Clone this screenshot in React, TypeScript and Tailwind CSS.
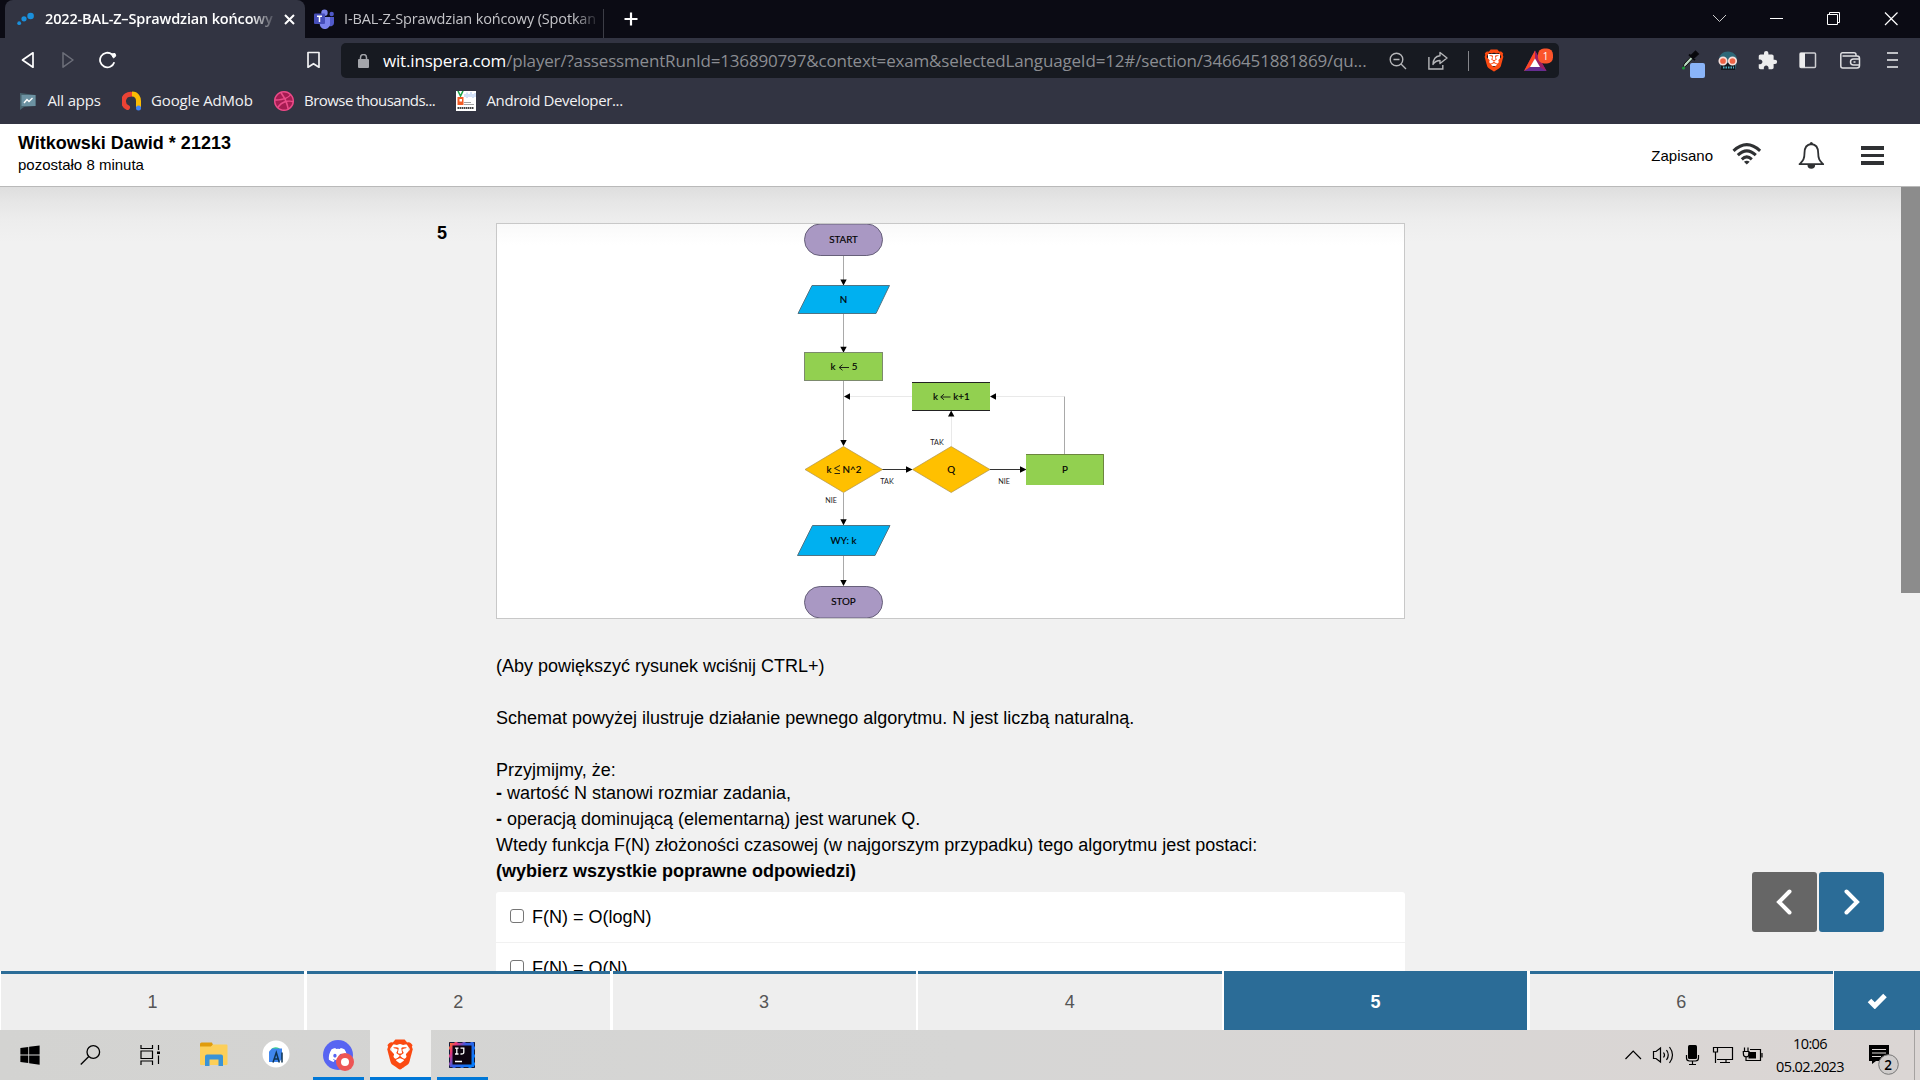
import React from "react";
import { SiBrave, SiDribbble } from "react-icons/si";
import { FaDiscord, FaWindows } from "react-icons/fa";
import { MdExtension } from "react-icons/md";

function TabStrip() {
  return (
    <div className="flex h-[38px] shrink-0 bg-[#0b0b14] pl-[5px] text-[14.5px] text-white">
      <div className="flex h-[38px] w-[300px] items-center rounded-t-[8px] bg-[#323442]">
        <svg className="ml-[12px] h-[14px] w-[17px] shrink-0" viewBox="0 0 17 14">
          <circle cx="2.2" cy="11.2" r="1.9" fill="#1a90dc" />
          <circle cx="7" cy="6.8" r="2.6" fill="#1a90dc" />
          <circle cx="13.6" cy="4" r="3.3" fill="#1a90dc" />
        </svg>
        <span className="ml-[11px] w-[230px] overflow-hidden whitespace-nowrap font-semibold tracking-[-0.15px] [mask-image:linear-gradient(to_right,black_205px,transparent_232px)]">
          2022-BAL-Z–Sprawdzian końcowy
        </span>
        <svg className="ml-[9px] h-[11px] w-[11px] shrink-0" viewBox="0 0 11 11">
          <path d="M1 1 L10 10 M10 1 L1 10" stroke="#fff" strokeWidth="2" />
        </svg>
      </div>
      <svg className="ml-[9px] mt-[9px] h-[20px] w-[20px] shrink-0" viewBox="0 0 20 20">
        <circle cx="17.700" cy="5" r="2.200" fill="#5059c9" />
        <path d="M14 8 h6 v6 a3.500 3.500 0 0 1 -5 3 z" fill="#5059c9" />
        <circle cx="10.500" cy="3.700" r="3.200" fill="#7b83eb" />
        <path d="M6 8 h10 v6 a5.200 5.200 0 0 1 -10.200 2 z" fill="#7b83eb" />
        <rect x="0" y="4.500" width="11" height="10.500" rx="1" fill="#464eb8" />
        <path d="M3 7.300 h5 M5.500 7.300 v5.700" stroke="#fff" strokeWidth="1.500" />
      </svg>
      <span className="ml-[10px] mt-[8px] w-[254px] overflow-hidden whitespace-nowrap leading-[22px] tracking-[-0.15px] text-[#c4c4c8] [mask-image:linear-gradient(to_right,black_230px,transparent_256px)]">
        I-BAL-Z-Sprawdzian końcowy (Spotkan
      </span>
      <div className="ml-[5px] mt-[9px] h-[29px] w-px bg-[#3c3d46]" />
      <svg className="ml-[20px] mt-[12px] h-[14px] w-[14px]" viewBox="0 0 14 14">
        <path d="M7 0.500 V13.500 M0.500 7 H13.500" stroke="#fff" strokeWidth="2.200" />
      </svg>
      <div className="ml-auto mr-[22px] mt-[12px] flex h-[14px]">
        <svg className="h-[14px] w-[204px]" viewBox="0 0 204 14" fill="none" stroke="#fff">
          <path d="M19 3 L25.500 9.500 L32 3" strokeWidth="1" stroke="#ccc" />
          <path d="M76 6.500 H89" />
          <path d="M133.500 2.500 h10 v10 h-10 z M135.500 2.500 v-2 h10 v10 h-2" />
          <path d="M191 0.500 L203.500 13 M203.500 0.500 L191 13" strokeWidth="1.200" />
        </svg>
      </div>
    </div>
  );
}

function BraveLion({ className }: { className: string }) {
  return (
    <span className={className}>
      <span className="absolute inset-x-[24%] bottom-[24%] top-[20%] rounded-b-[40%] bg-white" />
      <SiBrave className="relative h-full w-full text-[#fb4a12]" />
    </span>
  );
}

function Toolbar() {
  return (
    <div className="flex h-[40px] shrink-0 pl-[21px]">
      <svg className="mt-[13px] h-[18px] w-[96px] shrink-0" viewBox="0 0 96 18" fill="none">
        <path d="M12 1.800 V16.200 L1.500 9 Z" stroke="#fff" strokeWidth="1.700" strokeLinejoin="round" />
        <path d="M42 1.800 V16.200 L52 9 Z" stroke="#6d6f7a" strokeWidth="1.500" strokeLinejoin="round" />
        <path d="M91 3.400 A7.300 7.300 0 1 0 93.300 11.300" stroke="#fff" strokeWidth="1.800" />
        <path d="M90 3 L94 2.500 L94.800 5 L92.500 7 Z" fill="#fff" stroke="#fff" strokeLinejoin="round" />
      </svg>
      <svg className="ml-[190px] mt-[13px] h-[18px] w-[13px] shrink-0" viewBox="0 0 13 18">
        <path d="M1 1.500 h11 v14.700 l-5.500 -3.500 l-5.500 3.500 z" fill="none" stroke="#f2f2f4" strokeWidth="1.700" strokeLinejoin="round" />
      </svg>
      <div className="ml-[21px] mt-[5px] flex h-[35px] w-[1218px] shrink-0 items-center rounded-[5px] bg-[#171a21]">
        <svg className="ml-[17px] h-[14px] w-[11px] shrink-0" viewBox="0 0 11 14">
          <rect x="0" y="5" width="11" height="9" rx="1" fill="#a3a5aa" />
          <path d="M2.500 6 V3.500 a3 3 0 0 1 6 0 V6" fill="none" stroke="#a3a5aa" strokeWidth="1.500" />
        </svg>
        <span className="ml-[14px] w-[1000px] whitespace-nowrap text-[17px] tracking-[-0.17px] text-[#8b8d92]">
          <span className="text-white">wit.inspera.com</span>
          /player/?assessmentRunId=136890797&amp;context=exam&amp;selectedLanguageId=12#/section/3466451881869/qu...
        </span>
        <svg className="ml-[6px] h-[18px] w-[18px] shrink-0" viewBox="0 0 18 18" fill="none" stroke="#b5b6b9" strokeWidth="1.400">
          <circle cx="7.500" cy="7.500" r="6.300" />
          <path d="M12 12 L17 17 M4.500 7.500 H10.500" />
        </svg>
        <svg className="ml-[21px] h-[19px] w-[20px] shrink-0" viewBox="0 0 20 19" fill="none" stroke="#b5b6b9" strokeWidth="1.400">
          <path d="M0.900 6 V18 H14.800 V14" />
          <path d="M12 1.500 L19 7 L12 12.500 V9.500 C8.500 9.500 6.500 11 5 13.500 C5.200 8.500 8 5.200 12 4.800 Z" strokeLinejoin="round" />
        </svg>
        <div className="ml-[20px] h-[20px] w-px bg-[#85868b]" />
        <BraveLion className="relative ml-[14px] block h-[23px] w-[22px] shrink-0" />
        <svg className="ml-[18px] mt-[-2px] h-[26px] w-[32px] shrink-0" viewBox="0 0 32 26">
          <path d="M12 3.500 L23.500 24 H1 Z" fill="#662d91" />
          <path d="M12 3.500 L1 24 L7.500 19.800 L12 11.800 Z" fill="#ff4724" />
          <path d="M12 3.500 L23.500 24 L16.500 19.800 L12 11.800 Z" fill="#9e1f63" />
          <path d="M12 11.500 L17 20 H7 Z" fill="#fff" />
          <rect x="15" y="1.500" width="15" height="15" rx="6" fill="#fb542b" />
          <text x="22.500" y="12.800" fontSize="10" fill="#fff" textAnchor="middle">1</text>
        </svg>
      </div>
      <svg className="ml-[121px] mt-[12px] h-[30px] w-[62px] shrink-0" viewBox="0 0 62 30">
        <path d="M3 18 L4 14 L12 5.500 L14 7.500 L6 16 Z" fill="#b8d8c0" stroke="#111" />
        <path d="M9 4.500 L15 10 M11 6 L15.500 1.500 L18 4 L13.500 8 Z" fill="#08080c" stroke="#08080c" strokeWidth="1.800" />
        <circle cx="3.500" cy="18" r="1.500" fill="#1c9d3a" />
        <rect x="10" y="13" width="15" height="15" rx="2" fill="#8ab4f8" />
        <path d="M39 10 C39 4.500 43 1.500 48 1.500 C53 1.500 57 5 57 10 L55.500 19 H41 Z" fill="#2d6878" />
        <rect x="41" y="13" width="14" height="7" fill="#14191f" />
        <path d="M43 17.500 H54" stroke="#51b4c6" strokeWidth="2" strokeDasharray="1.500 1" />
        <circle cx="43" cy="11" r="3.700" fill="#ef6345" stroke="#f6dfdb" strokeWidth="1.700" />
        <circle cx="52.500" cy="11" r="3.700" fill="#ef6345" stroke="#f6dfdb" strokeWidth="1.700" />
      </svg>
      <MdExtension className="ml-[15px] mt-[12px] h-[21px] w-[21px] shrink-0 text-[#ededee]" />
      <svg className="ml-[21px] mt-[14px] h-[17px] w-[18px] shrink-0" viewBox="0 0 18 17">
        <rect x="1" y="1" width="15.500" height="14.500" rx="1" fill="none" stroke="#cfcfd3" strokeWidth="1.500" />
        <rect x="1" y="1" width="5" height="14.500" fill="#ededee" />
      </svg>
      <svg className="ml-[23px] mt-[14px] h-[17px] w-[21px] shrink-0" viewBox="0 0 21 17" fill="none" stroke="#dedee1" strokeWidth="1.500">
        <path d="M16 4 V2.800 a2 2 0 0 0 -2 -2 H2.500 a1.700 1.700 0 0 0 -1.700 1.700 V14 a2 2 0 0 0 2 2 H17 a2.500 2.500 0 0 0 2.500 -2.500 V6.500 a2.500 2.500 0 0 0 -2.500 -2.500 H2.500" />
        <path d="M20 7 H13.500 a3 3 0 0 0 0 6 H20 M13.500 10 h2" />
      </svg>
      <svg className="ml-[26px] mt-[14px] h-[16px] w-[11px] shrink-0" viewBox="0 0 11 16">
        <path d="M0 1 H11 M0 8 H11 M0 15 H11" stroke="#f0f0f2" strokeWidth="1.600" />
      </svg>
    </div>
  );
}

function Bookmarks() {
  return (
    <div className="flex h-[46px] shrink-0 items-center whitespace-nowrap pl-[20px] text-[15px] leading-[20px] text-[#f1f1f3]">
      <svg className="h-[18px] w-[16px]" viewBox="0 0 16 18">
        <path d="M0 1 L15.500 3 V14 L4 15 L0 18 Z" fill="#486570" />
        <path d="M1.500 3 L15.500 3 V14 L1.500 14 Z" fill="#6c92a2" />
        <path d="M4 11 L7 7.500 L9 9.500 L12.500 6" fill="none" stroke="#fff" strokeWidth="1.400" />
      </svg>
      <span className="-mt-[2px] ml-[11.500px] w-[74.500px] tracking-[-0.2px]">All apps</span>
      <svg className="h-[20px] w-[20px]" viewBox="0 0 20 20">
        <path d="M9 3.200 A7 7 0 0 0 5.500 16.500" fill="none" stroke="#ea4335" strokeWidth="5" strokeLinecap="round" />
        <path d="M10 3 C15 3 16.500 7 16.500 10 V16" fill="none" stroke="#fbbc04" strokeWidth="5" />
        <circle cx="16.500" cy="17" r="2.500" fill="#4285f4" />
      </svg>
      <span className="-mt-[2px] ml-[9px] w-[123px] tracking-[-0.15px]">Google AdMob</span>
      <span className="flex h-[20px] w-[20px] items-center justify-center rounded-full bg-[#a51c52]">
        <SiDribbble className="h-[20px] w-[20px] text-[#ea4c89]" />
      </span>
      <span className="-mt-[2px] ml-[10px] w-[152px] tracking-[-0.54px]">Browse thousands...</span>
      <svg className="h-[20px] w-[20px]" viewBox="0 0 20 20">
        <rect width="20" height="20" fill="#fff" />
        <path d="M2 0 L4.500 5 L7 0" fill="none" stroke="#1fa34a" strokeWidth="1.600" />
        <rect x="1.500" y="6" width="6" height="8" fill="#f15a24" />
        <rect x="3.500" y="8" width="2.500" height="2.500" fill="#fff" />
        <path d="M9 3 V6 M11 1.500 V7 M13 3 V6 M15 1 V6 M17 3 V7 M19 2 V6" stroke="#a8c4f0" />
        <path d="M8 11.500 H15 M8 13.500 H18" stroke="#8a8a8a" strokeWidth="0.800" />
        <path d="M1.500 17 H18" stroke="#444" strokeWidth="2" strokeDasharray="1.500 0.500" />
      </svg>
      <span className="-mt-[2px] ml-[10.500px] tracking-[-0.36px]">Android Developer...</span>
    </div>
  );
}

function ExamHeader() {
  return (
    <div className="flex h-[63px] shrink-0 border-b border-[#b9b9b9] bg-white pl-[18px] text-black">
      <div className="pt-[8px]">
        <div className="text-[18px] font-bold leading-[22px]">Witkowski Dawid * 21213</div>
        <div className="text-[15px] leading-[22px]">pozostało 8 minuta</div>
      </div>
      <span className="ml-auto mt-[21px] text-[15px] leading-[22px]">Zapisano</span>
      <svg className="ml-[19px] mt-[18px] h-[24px] w-[30px]" viewBox="0 0 30 24" fill="none" stroke="#2f3133" strokeWidth="3">
        <path d="M1.500 8.800 Q14.800 -3.500 28.100 8.800" />
        <path d="M5.800 13.200 Q14.800 4.600 23.800 13.200" />
        <path d="M9.800 17.300 Q14.800 12.500 19.800 17.300" />
        <path d="M11.900 19.800 Q14.800 17.500 17.700 19.800 L14.800 22.500 Z" fill="#2f3133" stroke="none" />
      </svg>
      <svg className="ml-[36px] mt-[17px] h-[29px] w-[27px]" viewBox="0 0 27 29">
        <path d="M13.300 3 C8 3.500 6.500 7 6.500 12 C6.500 19 4.500 20 1.500 23.200 H25.200 C22.200 20 20.200 19 20.200 12 C20.200 7 18.600 3.500 13.300 3 Z" fill="none" stroke="#2f3133" strokeWidth="1.800" strokeLinejoin="round" />
        <circle cx="13.300" cy="2.500" r="1.500" fill="#2f3133" />
        <path d="M9.500 24 a3.800 3.800 0 0 0 7.600 0 Z" fill="#2f3133" />
      </svg>
      <div className="ml-[36px] mr-[36px] mt-[22px] flex w-[23px] flex-col gap-[4px]">
        <div className="h-[3.500px] bg-[#2f3133]" />
        <div className="h-[3.500px] bg-[#2f3133]" />
        <div className="h-[3.500px] bg-[#2f3133]" />
      </div>
    </div>
  );
}

function Flowchart() {
  return (
    <svg className="block h-[396px] w-[909px]" viewBox="496 223 909 396" fontFamily="Lato, sans-serif">
      <g fill="none" stroke="#a9a9a9" strokeWidth="1">
        <path d="M843.500 256 V280 M843.500 314 V348 M843.500 381 V441 M843.500 493 V520 M843.500 556 V581 M1064.500 396.500 V454" />
        <path d="M850 396.500 H912 M996 396.500 H1064 M951.500 416 V446" stroke="#e9e9e9" />
        <path d="M882 469.500 H907 M990 469.500 H1020" stroke="#333" />
      </g>
      <g fill="#000">
        <path d="M840.300 279.500 h6.400 l-3.200 6 z M840.300 346.800 h6.400 l-3.200 6 z M840.300 440 h6.400 l-3.200 6 z M840.300 519.300 h6.400 l-3.200 6 z M840.300 580 h6.400 l-3.200 6 z" />
        <path d="M850 393.300 v6.400 l-6 -3.200 z M996 393.300 v6.400 l-6 -3.200 z M948 416.500 h6.400 l-3.200 -6 z M906 466.300 v6.400 l6.500 -3.200 z M1020 466.300 v6.400 l6.500 -3.200 z" />
      </g>
      <g strokeWidth="1">
        <rect x="804.500" y="224" width="78" height="31.500" rx="15.700" fill="#a998c3" stroke="#67607a" />
        <rect x="804.500" y="586.500" width="78" height="31.500" rx="15.700" fill="#a998c3" stroke="#67607a" />
        <path d="M812 285.500 H889.500 L876 313.500 H798 Z" fill="#00b0f0" stroke="#507484" />
        <path d="M812.500 525.500 H890 L875 555.500 H797.500 Z" fill="#00b0f0" stroke="#507484" />
        <rect x="804.500" y="352.500" width="78" height="28" fill="#92d050" stroke="#7c8a6d" />
        <rect x="912" y="382" width="78" height="29" fill="#92d050" />
        <path d="M912 382.500 H990 M912 410.500 H990" stroke="#222" />
        <rect x="1026" y="454" width="78" height="31" fill="#92d050" />
        <path d="M1026 454.500 H1103.500 V485" fill="none" stroke="#6c853f" />
        <path d="M805 469.500 L843.500 446.500 L882.500 469.500 L843.500 492.500 Z" fill="#ffc000" stroke="#ad924f" strokeWidth="0.700" />
        <path d="M912.500 469.500 L951.200 446.500 L990 469.500 L951.200 492.500 Z" fill="#ffc000" stroke="#ad924f" strokeWidth="0.700" />
      </g>
      <g fill="#000" stroke="#000" strokeWidth="0.150" fontSize="9.800" textAnchor="middle">
        <text x="843.500" y="243">START</text>
        <text x="843.500" y="303">N</text>
        <text x="833" y="370">k</text>
        <text x="854.500" y="370">5</text>
        <text x="935.500" y="400">k</text>
        <text x="961.500" y="400">k+1</text>
        <text x="829" y="473">k</text>
        <text x="852" y="473">N^2</text>
        <text x="951.200" y="473">Q</text>
        <text x="1065" y="473">P</text>
        <text x="843.500" y="544">WY: k</text>
        <text x="843.500" y="605.300">STOP</text>
      </g>
      <path d="M849 367.500 H839.500 M842.500 364.700 L839.200 367.500 L842.500 370.300 M950.500 397 H941 M944 394.200 L940.700 397 L944 399.800 M840 465.500 L834.500 468.300 L840 471.100 M834.500 473.500 H840" fill="none" stroke="#111" strokeWidth="0.900" />
      <g fill="#222" fontSize="7.200" textAnchor="middle">
        <text x="937" y="445">TAK</text>
        <text x="887" y="484">TAK</text>
        <text x="1004" y="484">NIE</text>
        <text x="831" y="503">NIE</text>
      </g>
    </svg>
  );
}

function Answer({ text }: { text: string }) {
  return (
    <div className="flex h-[50px] items-center bg-white pl-[14px]">
      <div className="-mt-[2px] h-[14px] w-[14px] rounded-[3px] border border-[#767676] bg-white" />
      <span className="ml-[8px]">{text}</span>
    </div>
  );
}

function Question() {
  return (
    <div className="relative flex h-[784px] shrink-0 overflow-hidden bg-[#f1f1f1] bg-[linear-gradient(to_bottom,#dedede_0px,#e6e6e6_15px,#ededed_32px,#f1f1f1_55px)] pl-[437px] pt-[36px] text-[18px] text-[#000]">
      <div className="w-[59px] shrink-0 text-[18px] font-bold leading-[20px]">5</div>
      <div className="w-[909px] shrink-0 leading-[26px]">
        <div className="h-[396px] bg-white bg-[linear-gradient(to_bottom,#f9f9f9,#ffffff_22px)] outline outline-1 -outline-offset-1 outline-[#c8c8c8]">
          <Flowchart />
        </div>
        <p className="mt-[34px]">(Aby powiększyć rysunek wciśnij CTRL+)</p>
        <p className="mt-[26px]">Schemat powyżej ilustruje działanie pewnego algorytmu. N jest liczbą naturalną.</p>
        <p className="mt-[26px]">Przyjmijmy, że:</p>
        <p className="-mt-[3px]"><b>-</b> wartość N stanowi rozmiar zadania,</p>
        <p><b>-</b> operacją dominującą (elementarną) jest warunek Q.</p>
        <p>Wtedy funkcja F(N) złożoności czasowej (w najgorszym przypadku) tego algorytmu jest postaci:</p>
        <p className="font-bold">(wybierz wszystkie poprawne odpowiedzi)</p>
        <div className="mt-[8px] flex flex-col gap-px overflow-hidden rounded-t-[3px]">
          <Answer text="F(N) = O(logN)" />
          <Answer text="F(N) = O(N)" />
        </div>
      </div>
      <div className="absolute right-0 top-0 h-[406px] w-[19px] bg-[#8c8c8c]" />
      <div className="absolute right-[36px] top-[685px] flex gap-[2px]">
        <div className="flex h-[60px] w-[65px] items-center justify-center rounded-[3px] bg-[#666666] pr-[2px]">
          <svg className="h-[26px] w-[16px]" viewBox="0 0 16 26">
            <path d="M13.500 2.500 L3 13 L13.500 23.500" fill="none" stroke="#fff" strokeWidth="4" strokeLinecap="round" />
          </svg>
        </div>
        <div className="flex h-[60px] w-[65px] items-center justify-center rounded-[3px] bg-[#2b6c97]">
          <svg className="h-[26px] w-[16px]" viewBox="0 0 16 26">
            <path d="M2.500 2.500 L13 13 L2.500 23.500" fill="none" stroke="#fff" strokeWidth="4" strokeLinecap="round" />
          </svg>
        </div>
      </div>
    </div>
  );
}

function QuestionNav() {
  return (
    <div className="flex h-[59px] shrink-0 bg-white pl-px text-[18px] text-[#555]">
      <div className="grid w-[1832px] grid-cols-6 gap-[2.500px]">
        {["1", "2", "3", "4", "5", "6"].map((n) =>
          n === "5" ? (
            <div key={n} className="flex items-center justify-center border-t-[3px] border-[#2b6c97] bg-[#2b6c97] font-bold text-white">{n}</div>
          ) : (
            <div key={n} className="flex items-center justify-center border-t-[3px] border-[#2b6c97] bg-[#eeeeee]">{n}</div>
          ),
        )}
      </div>
      <div className="ml-px flex flex-1 items-center justify-center bg-[#2b6c97]">
        <svg className="h-[16px] w-[21px]" viewBox="0 0 21 16">
          <path d="M2.500 7.500 L7.800 12.800 L18 2.600" fill="none" stroke="#fff" strokeWidth="5" />
        </svg>
      </div>
    </div>
  );
}

function Taskbar() {
  return (
    <div className="flex h-[50px] shrink-0 bg-[linear-gradient(to_right,#d3d3d1,#d6d6d5_50%,#dbd6d4)] text-black">
      <FaWindows className="ml-[19px] mt-[14px] h-[22px] w-[22px] shrink-0" />
      <svg className="ml-[39px] mt-[15px] h-[20px] w-[21px] shrink-0" viewBox="0 0 21 20" fill="none" stroke="#000" strokeWidth="1.300">
        <circle cx="13.300" cy="7" r="6.300" />
        <path d="M8.800 11.500 L0.800 19.500" />
      </svg>
      <svg className="ml-[39px] mt-[15px] h-[20px] w-[21px] shrink-0" viewBox="0 0 21 20" fill="none" stroke="#000" strokeWidth="1.200">
        <path d="M1 0 V3.500 H12.500 V0 M1 20 V16 H12.500 V20 M1 6 H12.500 V13.500 H1 Z M18.500 0 V5 M18.500 10.500 V19" />
        <rect x="17" y="6.500" width="3" height="2.500" fill="#000" stroke="none" />
      </svg>
      <svg className="ml-[39px] mt-[12px] h-[25px] w-[28px] shrink-0" viewBox="0 0 28 25">
        <path d="M0 2 a1.500 1.500 0 0 1 1.500 -1.500 H12 l1 2.500 l-2 2 H0 Z" fill="#e09c0c" />
        <path d="M0 4.500 H11 L13 2.500 H26.500 a1 1 0 0 1 1 1 V22 a1 1 0 0 1 -1 1 H1 a1 1 0 0 1 -1 -1 Z" fill="#fccf59" />
        <path d="M5 24 V14.500 a2 2 0 0 1 2 -2 H21 a2 2 0 0 1 2 2 V24 H18.500 V17.500 H9.500 V24 Z" fill="#3a93d6" />
      </svg>
      <svg className="ml-[34px] mt-[10px] h-[28px] w-[28px] shrink-0" viewBox="0 0 28 28">
        <circle cx="14" cy="14" r="13.500" fill="#fff" />
        <path d="M9 10 a5 4 0 0 1 9.500 0 z" fill="#3ddc84" />
        <path d="M7 11.500 L10 8.500 H20 V19 L17 22 H7 Z" fill="#3f86ee" />
        <path d="M11 22.500 L14.300 12.500 L17.300 22.500 M12 19 H16.500 M20 12.500 V22.500" fill="none" stroke="#0f3350" strokeWidth="1.500" />
      </svg>
      <div className="relative ml-[23px] h-[50px] w-[51px] shrink-0 border-b-[3px] border-[#0078d7]">
        <div className="ml-[10px] mt-[10px] flex h-[30px] w-[30px] items-center justify-center rounded-full bg-[#5865f2]">
          <FaDiscord className="h-[20px] w-[20px] text-white" />
        </div>
        <div className="absolute left-[23px] top-[23px] flex h-[18px] w-[18px] items-center justify-center rounded-full bg-[#ed5555]">
          <div className="h-[8px] w-[8px] rounded-full bg-white" />
        </div>
      </div>
      <div className="ml-[6px] h-[50px] w-[61px] shrink-0 border-b-[3px] border-[#0078d7] bg-[#f0f0ef]">
        <BraveLion className="relative ml-[15px] mt-[9px] block h-[31px] w-[30px]" />
      </div>
      <div className="ml-[6px] h-[50px] w-[51px] shrink-0 border-b-[3px] border-[#0078d7]">
        <svg className="ml-[12px] mt-[12px] h-[26px] w-[26px]" viewBox="0 0 26 26">
          <defs>
            <linearGradient id="ij" x1="0" y1="0" x2="1" y2="0.600">
              <stop offset="0" stopColor="#fc801d" />
              <stop offset="0.250" stopColor="#e0347c" />
              <stop offset="0.500" stopColor="#3b5be0" />
              <stop offset="1" stopColor="#087cfa" />
            </linearGradient>
          </defs>
          <rect width="26" height="26" fill="url(#ij)" />
          <rect x="0.500" y="0.500" width="25" height="25" fill="none" stroke="#141c3c" strokeDasharray="5 3" />
          <rect x="3.500" y="3.500" width="19" height="19" fill="#0d0410" />
          <path d="M6 6.200 H9.500 M7.800 6.200 V12 M6 12 H9.500 M11.500 6.200 H14.800 V10.500 Q14.800 12.200 11.500 12 M6 19.500 H13" fill="none" stroke="#fff" strokeWidth="1.300" />
        </svg>
      </div>
      <svg className="ml-auto mt-[14px] h-[22px] w-[140px] shrink-0" viewBox="1624 1044 140 22" fill="none" stroke="#000" strokeWidth="1.200">
        <path d="M1625.500 1059 L1633.200 1051 L1641 1059" />
        <path d="M1653.500 1051.500 H1656 L1660.500 1048 V1062 L1656 1058.500 H1653.500 Z" />
        <path d="M1663.500 1052.500 Q1665.500 1055 1663.500 1057.500 M1666.500 1050 Q1670 1055 1666.500 1060 M1669.500 1047 Q1675.500 1055 1669.500 1063" />
        <rect x="1688" y="1045" width="9" height="14" rx="1.500" fill="#000" stroke="none" />
        <path d="M1686.500 1055 V1058 a3 3 0 0 0 3 3 H1695.500 a3 3 0 0 0 3 -3 V1055 M1692.500 1061 V1064.500 M1689 1064.500 H1696" />
        <path d="M1718 1047.500 H1732.500 V1059.500 H1717 M1726 1059.500 V1062.500 M1720 1062.500 H1730 M1713.500 1047.500 H1717.500 V1052 H1713.500 Z M1715.500 1052 V1063" />
        <path d="M1750 1049.500 H1760.500 V1060.500 H1748 M1762 1053 V1057.500 M1744.500 1047.500 V1051 M1748 1047.500 V1051 M1743.300 1051.500 H1749 V1054 a2.800 2.800 0 0 1 -5.600 0 Z M1746 1057 V1060.500 H1749" />
        <rect x="1748.500" y="1052" width="7.500" height="6.500" fill="#000" stroke="none" />
      </svg>
      <div className="ml-[11px] mt-[2px] w-[70px] shrink-0 whitespace-nowrap text-center text-[14.500px] leading-[23px] tracking-[-0.600px]">
        <div>10:06</div>
        <div>05.02.2023</div>
      </div>
      <svg className="ml-[24px] mt-[14px] h-[32px] w-[31px] shrink-0" viewBox="1869 1044 31 32">
        <path d="M1869 1045 H1889 V1061 H1876 L1872 1064 V1061 H1869 Z" fill="#000" />
        <path d="M1872 1049.500 H1886 M1872 1053 H1886 M1872 1056.500 H1881" stroke="#dcd8d6" strokeWidth="1.200" />
        <circle cx="1888.500" cy="1064.500" r="9.800" fill="#cfcccb" stroke="#777" />
        <text x="1888" y="1069.500" fontSize="13.500" fontWeight="600" textAnchor="middle" fill="#000">2</text>
      </svg>
      <div className="ml-[14px] mr-[5px] h-[50px] w-px bg-[#a5a2a0]" />
    </div>
  );
}

export default function App() {
  return (
    <div className="flex h-[1080px] w-[1920px] flex-col overflow-hidden bg-[#323442] font-['Open_Sans',sans-serif]">
      <TabStrip />
      <Toolbar />
      <Bookmarks />
      <div className="flex shrink-0 flex-col font-['Liberation_Sans',Arial,sans-serif]">
        <ExamHeader />
        <Question />
        <QuestionNav />
      </div>
      <Taskbar />
    </div>
  );
}
